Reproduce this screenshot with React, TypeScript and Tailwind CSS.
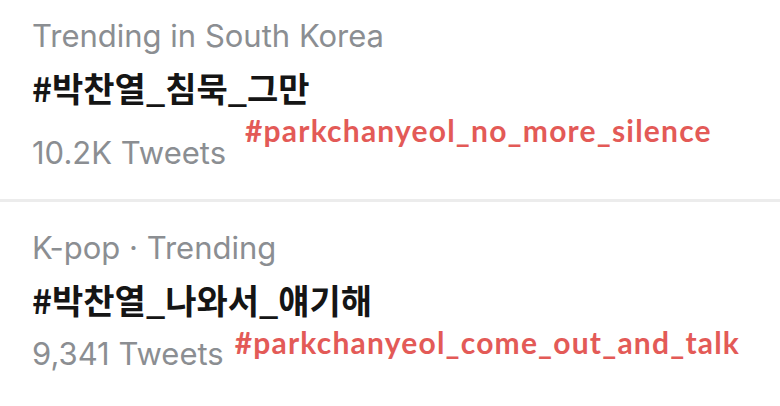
const sans = "font-['Inter','Noto_Sans_CJK_KR',sans-serif]";

function Trend({
  label,
  tag,
  count,
  note,
  noteClass,
}: {
  label: string;
  tag: string;
  count: string;
  note: string;
  noteClass: string;
}) {
  return (
    <div className="px-[32px]">
      <div className="text-[31px] leading-[40px] text-[#8b8e92]">{label}</div>
      <div className="mt-[9px] text-[34px] leading-[46px] font-bold text-[#151515] font-['Noto_Sans_CJK_KR',sans-serif]">
        {tag}
      </div>
      <div className="mt-[2px] flex items-end">
        <span className="text-[31px] leading-[40px] text-[#8b8e92]">{count}</span>
        <span
          className={
            "text-[30px] leading-[34px] font-bold tracking-[1.2px] text-[#e35a57] font-['Lato','Inter',sans-serif] " +
            noteClass
          }
        >
          {note}
        </span>
      </div>
    </div>
  );
}

export default function App() {
  return (
    <div className={"w-[780px] h-[406px] bg-white overflow-hidden " + sans}>
      <div className="pt-[16px] pb-[26px]">
        <Trend
          label="Trending in South Korea"
          tag="#박찬열_침묵_그만"
          count="10.2K Tweets"
          note="#parkchanyeol_no_more_silence"
          noteClass="ml-[19px] mb-[26px]"
        />
      </div>
      <div className="h-[3px] bg-[#ececec]" />
      <div className="pt-[26px]">
        <Trend
          label="K-pop · Trending"
          tag="#박찬열_나와서_얘기해"
          count="9,341 Tweets"
          note="#parkchanyeol_come_out_and_talk"
          noteClass="ml-[11px] mb-[15px]"
        />
      </div>
    </div>
  );
}
